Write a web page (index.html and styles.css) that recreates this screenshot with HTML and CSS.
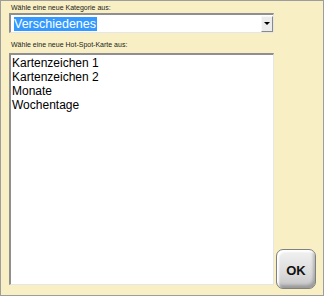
FILE: index.html
```html
<!DOCTYPE html>
<html lang="de">
<head>
    <meta charset="UTF-8">
    <meta name="viewport" content="width=device-width, initial-scale=1.0">
    <title>Hot-Spot-Karte wählen</title>
    <link rel="stylesheet" href="styles.css">
</head>
<body>
    <div class="dialog">
        <div class="caption">Wähle eine neue Kategorie aus:</div>
        <div class="combo">
            <span class="combo-value">Verschiedenes</span>
            <span class="combo-button"><span class="arrow"></span></span>
        </div>
        <div class="caption second">Wähle eine neue Hot-Spot-Karte aus:</div>
        <div class="bottom-row">
            <ul class="listbox">
                <li>Kartenzeichen 1</li>
                <li>Kartenzeichen 2</li>
                <li>Monate</li>
                <li>Wochentage</li>
            </ul>
            <button class="ok-button" type="button">OK</button>
        </div>
    </div>
</body>
</html>
```

FILE: styles.css
```css
body {
    margin: 0;
    font-family: "Liberation Sans", Arial, sans-serif;
}
.dialog {
    width: 324px;
    height: 296px;
    box-sizing: border-box;
    border: 1px solid #9d9d9d;
    background-color: #f8f0c4;
    padding: 2px 7px 6px 8px;
    display: flex;
    flex-direction: column;
}
.caption {
    font-size: 7px;
    line-height: 9px;
    color: #222;
    padding-left: 2px;
    margin-bottom: 1px;
}
.caption.second {
    margin-top: 7px;
    margin-bottom: 4px;
}
.combo {
    width: 265px;
    height: 20px;
    box-sizing: border-box;
    background-color: white;
    border-top: 2px solid #8f8f8f;
    border-left: 2px solid #8f8f8f;
    border-right: 1px solid #e6e6e6;
    border-bottom: 1px solid #e6e6e6;
    display: flex;
    align-items: center;
}
.combo-value {
    margin-left: 3px;
    background-color: #3399ff;
    color: white;
    font-size: 12.5px;
    line-height: 14px;
    padding-right: 1px;
}
.combo-button {
    margin-left: auto;
    width: 12px;
    height: 16px;
    box-sizing: border-box;
    background-color: #ececec;
    border-top: 1px solid #f8f8f8;
    border-left: 1px solid #f8f8f8;
    border-right: 1px solid #8a8a8a;
    border-bottom: 1px solid #8a8a8a;
    display: flex;
    align-items: center;
    justify-content: center;
}
.arrow {
    width: 0;
    height: 0;
    border-left: 3px solid transparent;
    border-right: 3px solid transparent;
    border-top: 3px solid #000;
}
.bottom-row {
    display: flex;
    gap: 2px;
    height: 236px;
}
.listbox {
    list-style: none;
    margin: 0;
    padding: 1px 0 0 1px;
    width: 265px;
    height: 232px;
    box-sizing: border-box;
    background-color: white;
    border-top: 2px solid #8f8f8f;
    border-left: 2px solid #8f8f8f;
    border-right: 1px solid #e6e6e6;
    border-bottom: 1px solid #e6e6e6;
    font-size: 12px;
    line-height: 14px;
    color: #000;
}
.ok-button {
    align-self: flex-end;
    width: 40px;
    height: 40px;
    padding: 3px 0 0 0;
    border: 1px solid #808080;
    border-radius: 7px;
    background: linear-gradient(#f2f2f2, #dcdcdc 60%, #c4c4c4);
    box-shadow: inset 2px 2px 2px #ffffff, inset -2px -3px 3px rgba(0,0,0,0.22);
    font-family: "Liberation Sans", Arial, sans-serif;
    font-weight: bold;
    font-size: 13px;
    color: #111;
    cursor: pointer;
}
```
